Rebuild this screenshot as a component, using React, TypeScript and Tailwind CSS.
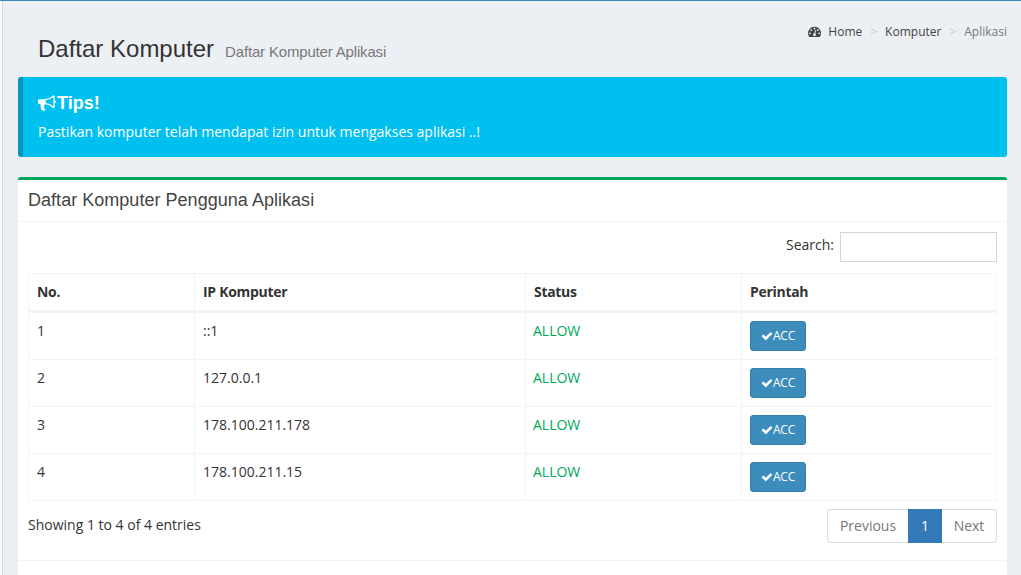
import type { ReactNode } from "react";

type IconProps = { className?: string };

function Glyph({ d, className }: IconProps & { d: string }) {
  return (
    <svg viewBox="0 0 1792 1792" fill="currentColor" className={className} aria-hidden="true">
      <path d={d} />
    </svg>
  );
}

const bullhorn =
  "M1664 640q53 0 90.5 37.5t37.5 90.5-37.5 90.5-90.5 37.5v384q0 52-38 90t-90 38q-417-347-812-380-58 19-91 66t-31 100.5 40 92.5q-20 33-23 65.5t6 58 33.5 55 48 50 61.5 50.5q-29 58-111.5 83t-168.5 11.5-132-55.5q-7-23-29.5-87.5t-32-94.5-23-89-15-101 3.5-98.5 22-110.5h-122q-66 0-113-47t-47-113v-192q0-66 47-113t113-47h480q435 0 896-384 52 0 90 38t38 90v384zm-128 604v-954q-394 302-768 343v270q377 42 768 341z";
const check =
  "M1671 566q0 40-28 68l-724 724-136 136q-28 28-68 28t-68-28l-136-136-362-362q-28-28-28-68t28-68l136-136q28-28 68-28t68 28l294 295 656-657q28-28 68-28t68 28l136 136q28 28 28 68z";
const dashboard =
  "M384 1152q0-53-37.5-90.5t-90.5-37.5-90.5 37.5-37.5 90.5 37.5 90.5 90.5 37.5 90.5-37.5 37.5-90.5zm192-448q0-53-37.5-90.5t-90.5-37.5-90.5 37.5-37.5 90.5 37.5 90.5 90.5 37.5 90.5-37.5 37.5-90.5zm428 481l101-382q6-26-7.5-48.5t-38.5-29.5-48 6.5-30 39.5l-101 382q-60 5-107 43.5t-63 98.5q-20 77 20 146t117 89 146-20 89-117q16-60-6-117t-72-91zm660-33q0-53-37.5-90.5t-90.5-37.5-90.5 37.5-37.5 90.5 37.5 90.5 90.5 37.5 90.5-37.5 37.5-90.5zm-640-640q0-53-37.5-90.5t-90.5-37.5-90.5 37.5-37.5 90.5 37.5 90.5 90.5 37.5 90.5-37.5 37.5-90.5zm448 192q0-53-37.5-90.5t-90.5-37.5-90.5 37.5-37.5 90.5 37.5 90.5 90.5 37.5 90.5-37.5 37.5-90.5zm320 448q0 261-141 483-19 29-54 29h-1402q-35 0-54-29-141-221-141-483 0-182 71-348t191-286 286-191 348-71 348 71 286 191 191 286 71 348z";

const computers = [
  { no: 1, ip: "::1", status: "ALLOW" },
  { no: 2, ip: "127.0.0.1", status: "ALLOW" },
  { no: 3, ip: "178.100.211.178", status: "ALLOW" },
  { no: 4, ip: "178.100.211.15", status: "ALLOW" },
];

function HeadCell({ children }: { children: ReactNode }) {
  return (
    <th className="h-[39px] border-r border-b-[3px] border-[#f4f4f4] px-2 text-left font-bold tracking-[-0.3px]">
      {children}
    </th>
  );
}

function Cell({ children }: { children: ReactNode }) {
  return <td className="h-[47px] border-r border-b border-[#f4f4f4] p-2 align-top">{children}</td>;
}

export default function App() {
  return (
    <div className="flex h-[575px] flex-col overflow-hidden bg-[#ecf0f5] font-['Open_Sans','Noto_Sans',sans-serif] text-sm leading-5 text-[#333]">
      <div className="h-px shrink-0 bg-[#3c8dbc]" />
      <div className="flex min-h-0 flex-1">
        <div className="w-[3px] shrink-0 border-r border-[#d2d6de] bg-[#f9fafc]" />
        <div className="min-w-0 flex-1 pr-3.5 pl-[15px]">
          <header className="flex h-[76px] items-start justify-between pl-5">
            <h1 className="flex items-baseline gap-[11px] pt-[35px] font-['Liberation_Sans',Arial,sans-serif] text-[24px] leading-[26px]">
              <span>Daftar Komputer</span>
              <small className="text-[15px] tracking-[-0.17px] text-[#777]">Daftar Komputer Aplikasi</small>
            </h1>
            <nav className="flex items-center pt-[22px] text-xs leading-[17px] text-[#444]">
              <Glyph d={dashboard} className="mr-[7px] size-[13px]" />
              <a>Home</a>
              <span className="px-2 text-[#ccc]">&gt;</span>
              <a>Komputer</a>
              <span className="px-2 text-[#ccc]">&gt;</span>
              <span className="text-[#777]">Aplikasi</span>
            </nav>
          </header>

          <section className="h-20 rounded-[3px] border-l-[5px] border-[#0097bc] bg-[#00c0ef] px-[15px] pt-4 text-white">
            <h4 className="flex items-center font-['Liberation_Sans',Arial,sans-serif] text-lg leading-5 font-bold">
              <Glyph d={bullhorn} className="mr-px size-[18px]" />
              Tips!
            </h4>
            <p className="mt-[9px]">Pastikan komputer telah mendapat izin untuk mengakses aplikasi ..!</p>
          </section>

          <section className="mt-5 h-[420px] rounded-[3px] border-t-[3px] border-[#00a65a] bg-white shadow-[0_1px_1px_rgba(0,0,0,0.1)]">
            <h3 className="h-[42px] border-b border-[#f4f4f4] px-2.5 pt-2.5 font-['Liberation_Sans',Arial,sans-serif] text-lg leading-5 tracking-[0.03px] text-[#444]">
              Daftar Komputer Pengguna Aplikasi
            </h3>
            <div className="h-[339px] border-b border-[#f4f4f4] p-2.5">
              <label className="flex items-start justify-end gap-[6px]">
                <span className="pt-[3px]">Search:</span>
                <input className="h-[30px] w-[157px] border border-[#d2d6de] bg-white px-2.5 outline-none" />
              </label>
              <table className="mt-[11px] w-full table-fixed border-separate border-spacing-0 border-t border-l border-[#f4f4f4]">
                <colgroup>
                  <col className="w-[166px]" />
                  <col className="w-[331px]" />
                  <col className="w-[216px]" />
                  <col />
                </colgroup>
                <thead>
                  <tr>
                    <HeadCell>No.</HeadCell>
                    <HeadCell>IP Komputer</HeadCell>
                    <HeadCell>Status</HeadCell>
                    <HeadCell>Perintah</HeadCell>
                  </tr>
                </thead>
                <tbody>
                  {computers.map((row) => (
                    <tr key={row.no}>
                      <Cell>{row.no}</Cell>
                      <Cell>{row.ip}</Cell>
                      <Cell>
                        <span className="-ml-px text-[#00a65a]">{row.status}</span>
                      </Cell>
                      <Cell>
                        <button className="flex h-[30px] w-14 items-center justify-center rounded-[3px] border border-[#367fa9] bg-[#3c8dbc] text-xs tracking-[-0.2px] text-white">
                          <Glyph d={check} className="size-3" />
                          ACC
                        </button>
                      </Cell>
                    </tr>
                  ))}
                </tbody>
              </table>
              <div className="flex justify-between pt-2">
                <span className="pt-[6px]">Showing 1 to 4 of 4 entries</span>
                <div className="flex h-[34px] text-center leading-8 text-[#777]">
                  <a className="w-[81px] rounded-l border border-r-0 border-[#ddd]">Previous</a>
                  <a className="w-[34px] border border-[#337ab7] bg-[#337ab7] text-white">1</a>
                  <a className="w-[55px] rounded-r border border-l-0 border-[#ddd]">Next</a>
                </div>
              </div>
            </div>
          </section>
        </div>
      </div>
    </div>
  );
}
